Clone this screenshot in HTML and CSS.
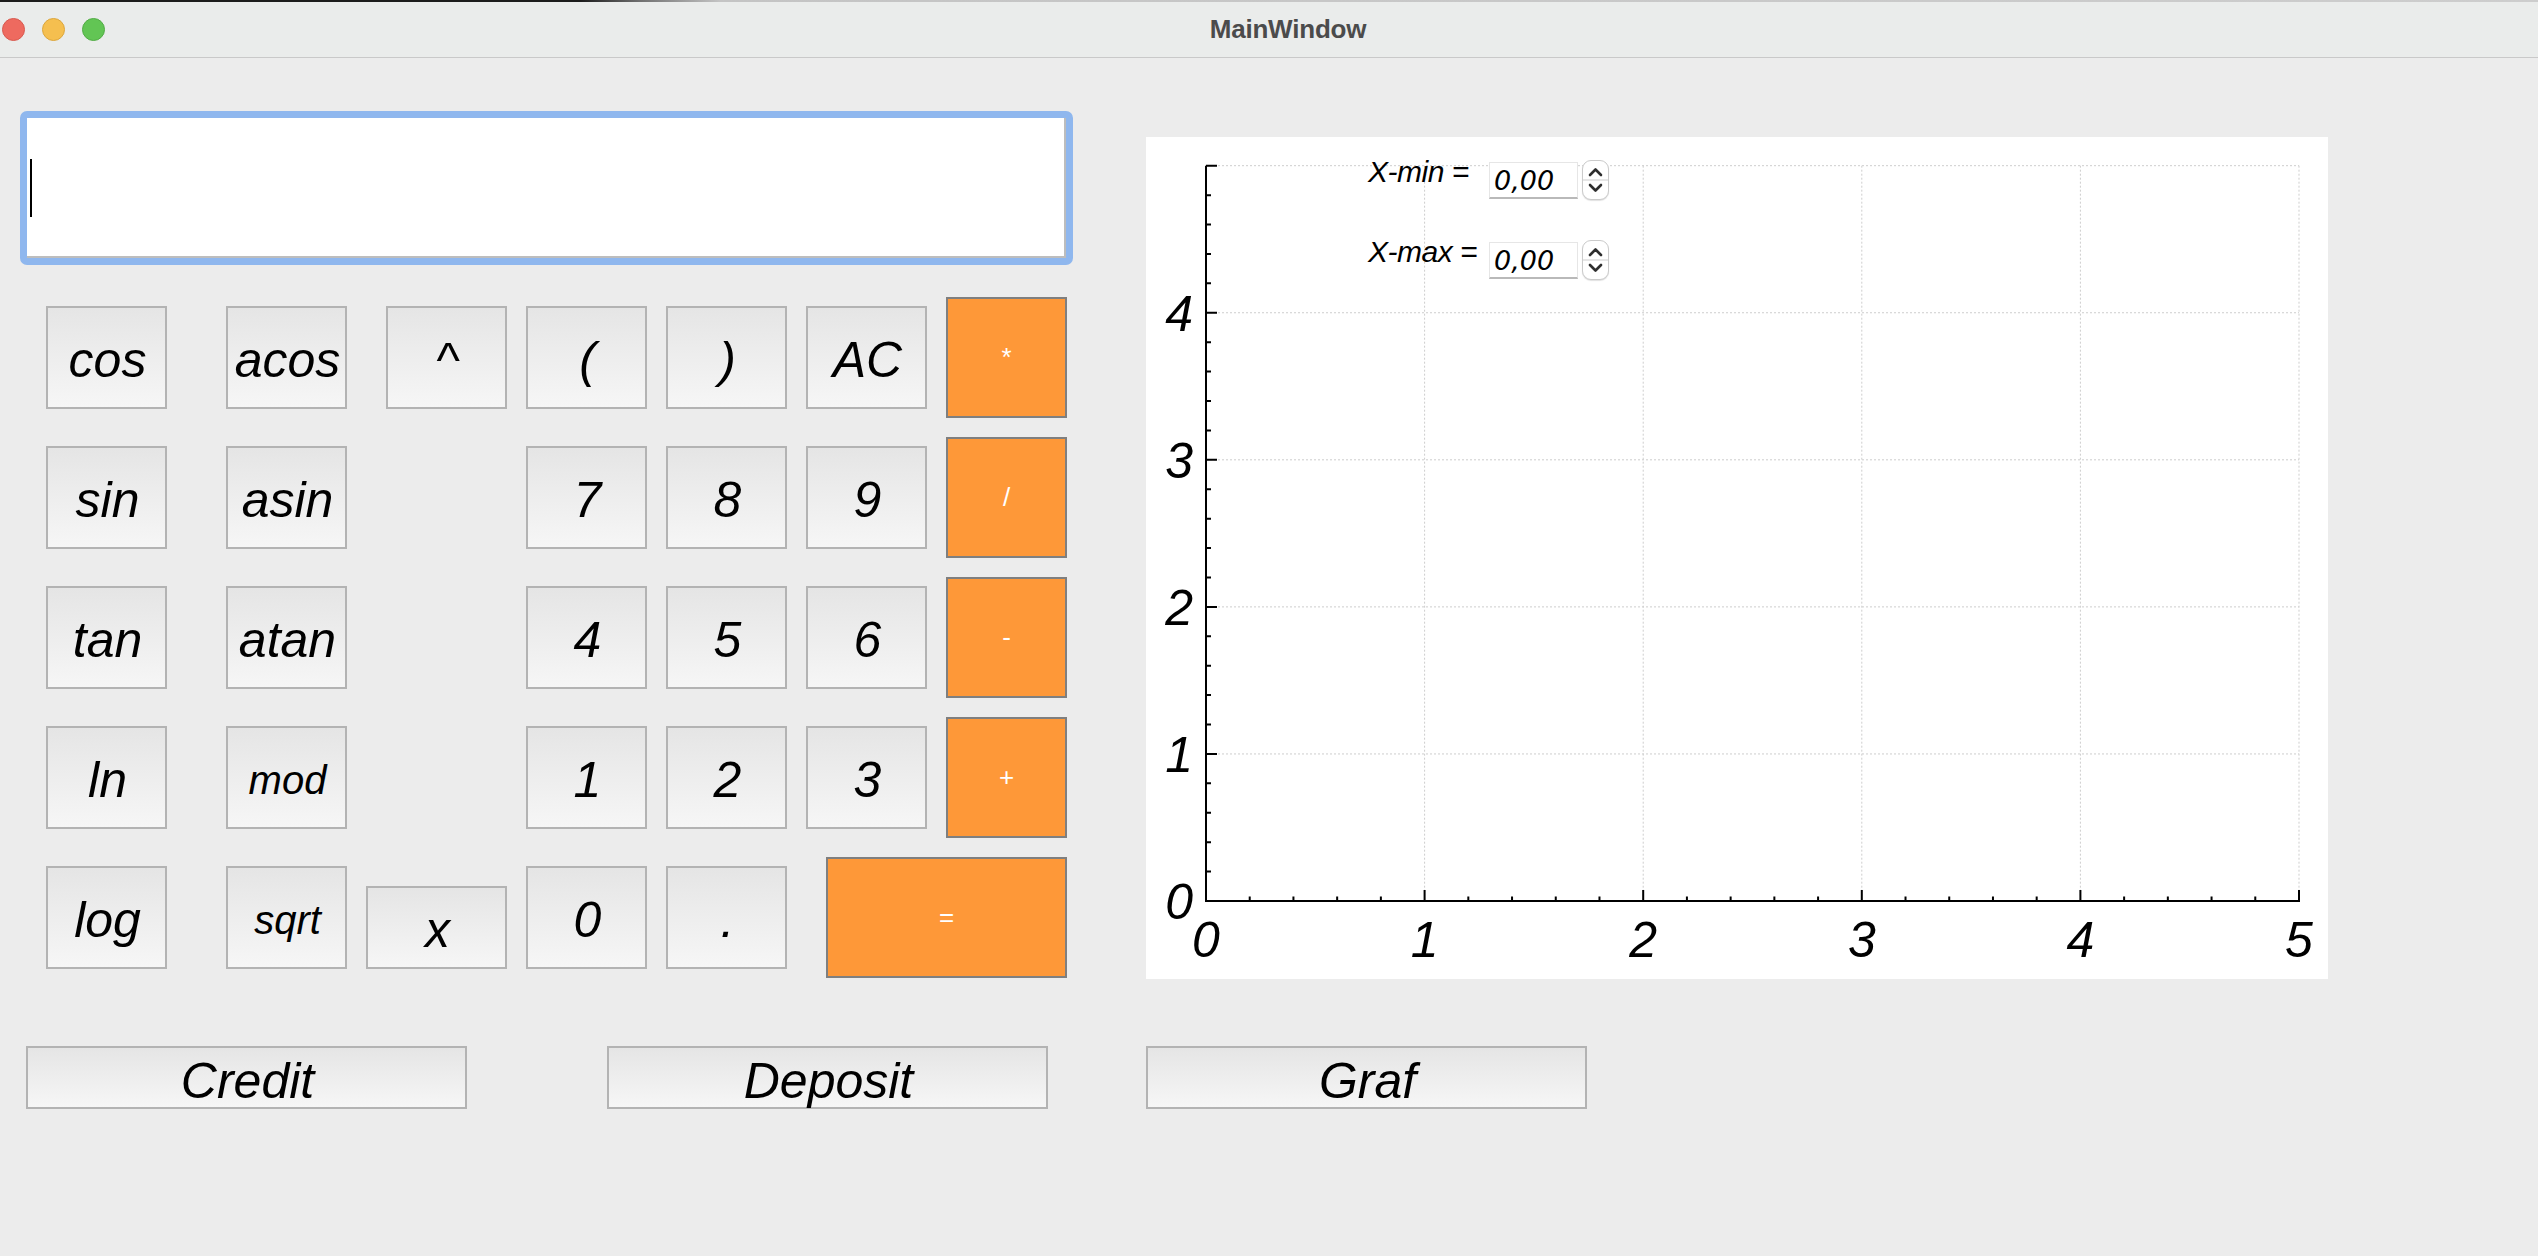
FILE: index.html
```html
<!DOCTYPE html>
<html>
<head>
<meta charset="utf-8">
<title>MainWindow</title>
<link rel="stylesheet" href="styles.css">
</head>
<body>
<div class="topstrip"></div>
<header class="titlebar">
  <div class="lights">
    <span class="light red"></span>
    <span class="light yellow"></span>
    <span class="light green"></span>
  </div>
  <div class="title">MainWindow</div>
  <div></div>
</header>
<main class="content">
  <section class="top">
    <div class="left">
      <div class="display"><span class="caret"></span></div>
      <div class="keypad">
        <button class="key">cos</button>
        <button class="key">acos</button>
        <button class="key end">^</button>
        <button class="key">(</button>
        <button class="key">)</button>
        <button class="key">AC</button>
        <button class="op">*</button>

        <button class="key">sin</button>
        <button class="key">asin</button>
        <button class="key c4">7</button>
        <button class="key">8</button>
        <button class="key">9</button>
        <button class="op">/</button>

        <button class="key">tan</button>
        <button class="key">atan</button>
        <button class="key c4">4</button>
        <button class="key">5</button>
        <button class="key">6</button>
        <button class="op">-</button>

        <button class="key">ln</button>
        <button class="key sm">mod</button>
        <button class="key c4">1</button>
        <button class="key">2</button>
        <button class="key">3</button>
        <button class="op">+</button>

        <button class="key">log</button>
        <button class="key sm">sqrt</button>
        <button class="key xkey">x</button>
        <button class="key">0</button>
        <button class="key">.</button>
        <button class="op eq">=</button>
      </div>
    </div>
    <div class="graph">
      <svg class="plot" width="1182" height="842" viewBox="0 0 1182 842">
        <g class="grid">
          <path d="M278.6 28.7V764M497.2 28.7V764M715.8 28.7V764M934.4 28.7V764M1153 28.7V764"/>
          <path d="M60 28.7H1153M60 175.76H1153M60 322.82H1153M60 469.88H1153M60 616.94H1153"/>
        </g>
        <g class="axis">
          <path d="M60 28.7V765M59 764H1154"/>
          <path d="M60 764v-11M278.6 764v-11M497.2 764v-11M715.8 764v-11M934.4 764v-11M1153 764v-11"/>
          <path d="M103.72 764v-4.5M147.44 764v-4.5M191.16 764v-4.5M234.88 764v-4.5M322.32 764v-4.5M366.04 764v-4.5M409.76 764v-4.5M453.48 764v-4.5M540.92 764v-4.5M584.64 764v-4.5M628.36 764v-4.5M672.08 764v-4.5M759.52 764v-4.5M803.24 764v-4.5M846.96 764v-4.5M890.68 764v-4.5M978.12 764v-4.5M1021.84 764v-4.5M1065.56 764v-4.5M1109.28 764v-4.5"/>
          <path d="M60 28.7h11M60 175.76h11M60 322.82h11M60 469.88h11M60 616.94h11"/>
          <path d="M60 734.59h5M60 705.18h5M60 675.78h5M60 646.37h5M60 587.53h5M60 558.12h5M60 528.72h5M60 499.31h5M60 440.47h5M60 411.06h5M60 381.66h5M60 352.25h5M60 293.41h5M60 264h5M60 234.6h5M60 205.19h5M60 146.35h5M60 116.94h5M60 87.54h5M60 58.13h5"/>
        </g>
        <g class="labels xl">
          <text x="60" y="820">0</text>
          <text x="278.6" y="820">1</text>
          <text x="497.2" y="820">2</text>
          <text x="715.8" y="820">3</text>
          <text x="934.4" y="820">4</text>
          <text x="1153" y="820">5</text>
        </g>
        <g class="labels yl">
          <text x="47" y="782">0</text>
          <text x="47" y="634.94">1</text>
          <text x="47" y="487.88">2</text>
          <text x="47" y="340.82">3</text>
          <text x="47" y="193.76">4</text>
        </g>
      </svg>
      <div class="ranges">
        <div class="range">
          <span class="rlabel">X-min =</span>
          <span class="spin">0,00</span>
          <span class="arrows"><svg width="27" height="40" viewBox="0 0 27 40"><path class="div" d="M1 20H26"/><path class="chev" d="M8 15L13.5 9.5L19 15M8 25L13.5 30.5L19 25"/></svg></span>
        </div>
        <div class="range">
          <span class="rlabel">X-max =</span>
          <span class="spin">0,00</span>
          <span class="arrows"><svg width="27" height="40" viewBox="0 0 27 40"><path class="div" d="M1 20H26"/><path class="chev" d="M8 15L13.5 9.5L19 15M8 25L13.5 30.5L19 25"/></svg></span>
        </div>
      </div>
    </div>
  </section>
  <section class="bottom">
    <button class="wide credit">Credit</button>
    <button class="wide deposit">Deposit</button>
    <button class="wide graf">Graf</button>
  </section>
</main>
</body>
</html>
```
FILE: styles.css
```css
* { box-sizing: border-box; }
html, body { margin: 0; padding: 0; }
body {
  width: 2538px;
  height: 1256px;
  overflow: hidden;
  background: #ececec;
  font-family: "Liberation Sans", Arial, sans-serif;
}
.topstrip {
  height: 2px;
  background: linear-gradient(to right, #1c1c1c 0, #1c1c1c 580px, #707070 640px, #c4c4c4 720px, #cdcdcd 100%);
}
.titlebar {
  height: 56px;
  background: #eaeceb;
  border-bottom: 1px solid #c9c9c9;
  display: grid;
  grid-template-columns: 1fr auto 1fr;
  align-items: center;
}
.lights { display: flex; gap: 17px; padding-left: 2px; }
.light { width: 23px; height: 23px; border-radius: 50%; display: block; }
.red { background: #ee6a5f; border: 1px solid #d85a4f; }
.yellow { background: #f5bf4f; border: 1px solid #dca63c; }
.green { background: #62c554; border: 1px solid #52ac45; }
.title {
  font-weight: bold;
  font-size: 26px;
  color: #4b4b4b;
  padding-left: 38px;
  letter-spacing: -0.2px;
}
.content { padding-top: 53px; }
.top { display: flex; align-items: flex-start; }
.left { margin-left: 20px; width: 1053px; }
.display {
  height: 154px;
  border: 7px solid #8fb7ee;
  border-radius: 7px;
  background: #fff;
  box-shadow: inset -2px -2px 0 #bdbdbd;
  display: flex;
  align-items: center;
}
.caret { width: 2px; height: 58px; background: #000; margin-left: 3px; }
.keypad {
  display: grid;
  grid-template-columns: 161px 121px 141px 121px 121px 121px 121px;
  grid-auto-rows: 121px;
  column-gap: 19px;
  row-gap: 19px;
  margin: 32px 0 0 26px;
}
button { margin: 0; padding: 0; appearance: none; -webkit-appearance: none; cursor: default; }
.key {
  width: 121px;
  height: 103px;
  align-self: center;
  justify-self: start;
  border: 2px solid #b3b3b3;
  border-radius: 0;
  background: linear-gradient(#e5e5e5, #f6f6f6);
  font-family: "Liberation Sans", Arial, sans-serif;
  font-style: italic;
  font-size: 50px;
  color: #000;
  line-height: normal;
  padding-top: 5px;
  padding-left: 2px;
}
.key.sm { font-size: 40px; }
.key.end { justify-self: end; }
.key.c4 { grid-column: 4; }
.key.xkey { width: 141px; height: 83px; align-self: end; margin-bottom: 9px; }
.op {
  width: 121px;
  height: 121px;
  border: 2px solid #7f7f7f;
  border-radius: 0;
  background: #fe9838;
  color: #fff;
  font-family: "Liberation Sans", Arial, sans-serif;
  font-size: 26px;
}
.op.eq { grid-column: 6 / span 2; justify-self: end; width: 241px; }
.graph {
  position: relative;
  margin-left: 73px;
  margin-top: 26px;
  width: 1182px;
  height: 842px;
  background: #fff;
}
.plot { display: block; }
.grid path { stroke: #cdcdcd; stroke-width: 1; stroke-dasharray: 2 2; fill: none; }
.axis path { stroke: #000; stroke-width: 2; fill: none; }
.labels text { font-family: "Liberation Sans", Arial, sans-serif; font-style: italic; font-size: 50px; fill: #000; }
.xl text { text-anchor: middle; }
.yl text { text-anchor: end; }
.ranges {
  position: absolute;
  left: 222px;
  top: 23px;
  display: flex;
  flex-direction: column;
  row-gap: 40px;
}
.range { display: flex; align-items: center; height: 40px; }
.rlabel {
  width: 121px;
  align-self: flex-start;
  margin-top: -5px;
  font-style: italic;
  font-size: 30px;
  letter-spacing: -0.5px;
  color: #000;
  white-space: nowrap;
}
.spin {
  width: 89px;
  height: 37px;
  background: #fff;
  border: 1px solid #e6e6e6;
  border-bottom: 2px solid #b9b9b9;
  font-family: "DejaVu Sans", sans-serif;
  font-style: italic;
  font-size: 27px;
  padding-left: 4px;
  padding-top: 2px;
  display: flex;
  align-items: center;
  color: #000;
}
.arrows {
  margin-left: 4px;
  width: 27px;
  height: 40px;
  border: 1px solid #cbcbcb;
  border-radius: 9px;
  background: #fff;
  overflow: hidden;
  box-shadow: 0 1px 1px rgba(0,0,0,0.12);
}
.arrows svg { display: block; margin: -1px 0 0 -1px; }
.arrows .div { stroke: #dedede; stroke-width: 1.5; fill: none; }
.arrows .chev { stroke: #2e2e2e; stroke-width: 2.6; fill: none; stroke-linecap: round; stroke-linejoin: round; }
.bottom { display: flex; margin-top: 67px; }
.wide {
  width: 441px;
  height: 63px;
  border: 2px solid #b3b3b3;
  border-radius: 0;
  background: linear-gradient(#e5e5e5, #f6f6f6);
  font-family: "Liberation Sans", Arial, sans-serif;
  font-style: italic;
  font-size: 50px;
  color: #000;
  line-height: normal;
  padding-top: 4px;
  padding-left: 2px;
}
.credit { margin-left: 26px; }
.deposit { margin-left: 140px; }
.graf { margin-left: 98px; }
```
